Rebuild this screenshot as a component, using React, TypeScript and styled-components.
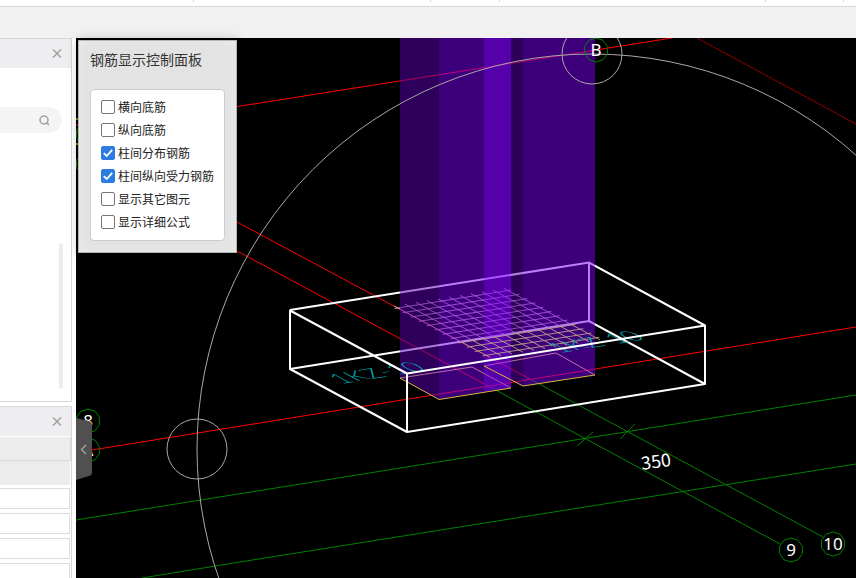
import React, { useState } from "react";
import styled, { createGlobalStyle } from "styled-components";

const GlobalStyle = createGlobalStyle`
  * { box-sizing: border-box; }
  html, body { margin: 0; height: 100%; overflow: hidden; }
  body { font-family: "Noto Sans CJK SC", sans-serif; font-size: 12px; color: #333; background: #fff; }
  button, input { font: inherit; margin: 0; }
`;

const Page = styled.div`
  display: flex;
  flex-direction: column;
  height: 100vh;
`;

const RibbonFooter = styled.div`
  display: grid;
  grid-template-columns: 194fr 237fr 69fr 266fr 78fr 12fr;
  height: 7px;
  flex: none;
  border-bottom: 1px solid #d8d8d8;
`;

const RibbonGroup = styled.div`
  height: 2px;
  border-right: 1px solid #d6d6d6;
  &:last-child { border-right: 0; }
`;

const Toolbar = styled.div`
  height: 31px;
  flex: none;
  background: #f1f1f1;
`;

const Workspace = styled.div`
  display: flex;
  flex: 1;
  min-height: 0;
`;

const Sidebar = styled.aside`
  display: flex;
  flex-direction: column;
  gap: 4px;
  width: 72px;
  margin-right: 4px;
  flex: none;
`;

const Dock = styled.section<{ $grow?: boolean }>`
  display: flex;
  flex-direction: column;
  flex: ${(p) => (p.$grow ? "1 1 0" : "0 0 364px")};
  min-height: 0;
  overflow: hidden;
  border: solid #d6d6d8;
  border-width: ${(p) => (p.$grow ? "1px 1px 0 0" : "1px 1px 1px 0")};
`;

const DockHeader = styled.header`
  display: flex;
  justify-content: flex-end;
  align-items: center;
  height: 29px;
  flex: none;
  padding-right: 8px;
  background: #eeeef0;
`;

const IconButton = styled.button`
  display: flex;
  align-items: center;
  justify-content: center;
  width: 12px;
  height: 12px;
  padding: 0;
  border: 0;
  background: none;
  color: #9c9c9e;
`;

const DockBody = styled.div`
  display: flex;
  flex-direction: column;
  flex: 1;
  padding: 39px 8px 12px 0;
`;

const SearchBox = styled.label`
  display: flex;
  align-items: center;
  height: 26px;
  margin-right: 1px;
  padding-right: 12px;
  border-radius: 0 13px 13px 0;
  background: #f4f4f4;
  color: #a0a0a0;
`;

const SearchInput = styled.input`
  flex: 1;
  min-width: 0;
  border: 0;
  outline: 0;
  background: none;
`;

const ScrollThumb = styled.div`
  align-self: flex-end;
  width: 4px;
  height: 146px;
  margin-top: auto;
  border-radius: 2px;
  background: #ececec;
`;

const PropertyHead = styled.div`
  height: 25px;
  flex: none;
  border: solid #d6d6d6;
  border-width: 1px 1px 1px 0;
  border-top-color: #fff;
  background: #ececec;
`;

const PropertyGroup = styled.div`
  height: 24px;
  flex: none;
  margin-right: 1px;
  background: #ececec;
`;

const PropertyList = styled.div`
  display: flex;
  flex-direction: column;
  gap: 4px;
  padding: 3px 1px 0 0;
`;

const PropertyInput = styled.input`
  width: 100%;
  height: 21px;
  flex: none;
  border: 1px solid #dcdcdc;
  border-left: 0;
  background: #fff;
`;

const Viewport = styled.main`
  position: relative;
  flex: 1;
  min-width: 0;
  background: #000;
`;

const Scene = styled.svg`
  display: block;
  width: 100%;
  height: 100%;
`;

const CollapseHandle = styled.button`
  position: absolute;
  left: 0;
  top: 380px;
  width: 16px;
  height: 62px;
  padding: 0;
  border: 0;
  background: none;
`;

const ControlPanel = styled.form`
  position: absolute;
  left: 2px;
  top: 2px;
  width: 159px;
  padding: 8px 11px 11px;
  border: 1px solid #b4b4b4;
  background: #e3e3e3;
  box-shadow: inset 0 0 10px #ececec, 0 0 10px rgba(0, 0, 0, 0.25);
`;

const PanelTitle = styled.h1`
  margin: 0 0 20px;
  font-size: 14px;
  line-height: 20px;
  font-weight: 400;
  color: #333;
`;

const OptionList = styled.div`
  padding: 5px 10px 7px;
  border: 1px solid #ccc;
  border-radius: 4px;
  background: #fff;
`;

const Option = styled.label`
  display: flex;
  align-items: center;
  gap: 3px;
  height: 23px;
  white-space: nowrap;
  color: #222;
`;

const CheckMark = styled.span`
  display: grid;
  flex: none;
  width: 14px;
  height: 14px;
`;

const Check = styled.input`
  grid-area: 1 / 1;
  appearance: none;
  width: 14px;
  height: 14px;
  border: 1px solid #767676;
  border-radius: 2px;
  background: #fff;
  &:checked { border-color: #2b7de1; background: #2b7de1; }
`;

const Tick = styled.svg`
  grid-area: 1 / 1;
  pointer-events: none;
`;

const OPTIONS = [
  { label: "横向底筋", on: false },
  { label: "纵向底筋", on: false },
  { label: "柱间分布钢筋", on: true },
  { label: "柱间纵向受力钢筋", on: true },
  { label: "显示其它图元", on: false },
  { label: "显示详细公式", on: false },
];

function CloseIcon() {
  return (
    <svg width="12" height="12" viewBox="0 0 12 12" fill="none" stroke="currentColor" strokeWidth="1.3">
      <path d="M2 1.500l8 8M10 1.500l-8 8" />
    </svg>
  );
}

function SearchIcon() {
  return (
    <svg width="12" height="12" viewBox="0 0 12 12" fill="none" stroke="currentColor" strokeWidth="1.5">
      <circle cx="6" cy="6" r="4" />
      <path d="M8.600 8.600l2.400 2.400" />
    </svg>
  );
}

/** Ten-sided bubble that carries the name of a grid axis. */
function AxisBubble({ x, y, label }: { x: number; y: number; label?: string }) {
  const points = Array.from({ length: 10 }, (_, i) => {
    const a = (i * Math.PI) / 5 - Math.PI / 2;
    return `${(x + 12 * Math.cos(a)).toFixed(1)},${(y + 12 * Math.sin(a)).toFixed(1)}`;
  }).join(" ");
  return (
    <g>
      <polygon points={points} fill="none" stroke="#008000" />
      {label && (
        <text x={x} y={y + 6} textAnchor="middle" fontSize="17" fill="#fff" fontFamily='"Noto Sans", sans-serif'>
          {label}
        </text>
      )}
    </g>
  );
}

/** Distribution bars, on the ground plane between the two columns. */
function rebarMesh() {
  const at = (u: number, v: number): string =>
    `${(398 + 11 * u + 8 * v).toFixed(1)} ${(308 - 1.75 * u + 4.3 * v).toFixed(1)}`;
  let d = "";
  for (let v = 0; v <= 11; v += 1) d += `M${at(-0.3, v)}L${at(10.3, v)}`;
  for (let u = 0; u <= 10; u += 1) d += `M${at(u, -0.5)}L${at(u, 11.5)}`;
  return d;
}

const MESH = rebarMesh();

function ModelScene() {
  return (
    <Scene viewBox="76 38 780 540" preserveAspectRatio="xMinYMin slice" fill="none" role="img" aria-label="三维模型">
      <defs>
        <clipPath id="meshBack">
          <path d="M380 280H640V313L290 369H380Z" />
        </clipPath>
        <clipPath id="meshFront">
          <path d="M290 369L640 313V380H290Z" />
        </clipPath>
      </defs>

      <g stroke="#008000">
        <path d="M76 520L856 395M142 578L240 562L560 511L856 464" />
        <path d="M490 387L780 544M530 379L823 537" />
        <path d="M577 446L593 432M620 439L635 424" />
      </g>
      <g stroke="#ff0000">
        <path d="M76 132L672 38M237 222L530 379M237 251L490 387M92 450L856 327" />
        <path d="M697 38L856 124" stroke="#900000" />
        <path d="M76 125h3M76 164h3" />
      </g>
      <path d="M76 119h3M76 144h3" stroke="#ffff00" />

      <g stroke="#fff" strokeWidth="2">
        <path d="M290 310L589 262.500L705 325.500M589 262.500V321M290 369L589 321L705 384" />
      </g>
      <path d={MESH} stroke="#e8b8d8" strokeOpacity="0.8" clipPath="url(#meshBack)" />
      <path d="M400 378L472 367L511 388M484 366L556 353L595 375" stroke="#ffe060" />

      <g fillOpacity="0.5">
        <path d="M400 38H439V399.500L400 378Z" fill="#5c00b8" />
        <path d="M439 38H484V392L439 399.500Z" fill="#7c00f4" />
        <path d="M484 38H511V388L484 392Z" fill="#8000ff" fillOpacity="0.667" />
        <path d="M511 38H523V386L511 380Z" fill="#5c00b8" />
        <path d="M523 38H595V375L523 386Z" fill="#7c00f4" />
      </g>

      <path d={MESH} stroke="#b8a090" strokeOpacity="0.9" clipPath="url(#meshFront)" />
      <g fill="#00a0a8" fontFamily="Lato, sans-serif" fontWeight="300" fontSize="26">
        <text transform="matrix(1 -0.16 0.86 0.47 341 384)">1KZ-10</text>
        <text transform="matrix(1 -0.16 0.86 0.47 560 353)">1KZ-10</text>
      </g>
      <path d="M400 378L439 399.500L511 388M484 366L523 386L595 375" stroke="#d8b838" />
      <g stroke="#fff" strokeWidth="2" strokeLinejoin="round">
        <path d="M290 310.500L407 373.500L705 325.500V384L407 432L290 369ZM407 373V432" />
      </g>

      <g stroke="#a8a8a8">
        <circle cx="592" cy="449" r="395" />
        <circle cx="592" cy="54" r="30" />
        <circle cx="197" cy="449" r="30" />
      </g>

      <AxisBubble x={596} y={50} label="B" />
      <AxisBubble x={791} y={550} label="9" />
      <AxisBubble x={833} y={544} label="10" />
      <AxisBubble x={88} y={421} label="8" />
      <AxisBubble x={88} y={450} label="A" />
      <AxisBubble x={88} y={134} />
      <AxisBubble x={88} y={164} />
      <text
        transform="translate(642 470) rotate(-8)"
        fontSize="18"
        fill="#fff"
        fontFamily='"Noto Sans CJK SC", sans-serif'
      >
        350
      </text>
    </Scene>
  );
}

function RebarPanel() {
  const [checked, setChecked] = useState(OPTIONS.map((o) => o.on));
  return (
    <ControlPanel>
      <PanelTitle>钢筋显示控制面板</PanelTitle>
      <OptionList>
        {OPTIONS.map((option, i) => (
          <Option key={option.label}>
            <CheckMark>
              <Check
                type="checkbox"
                checked={checked[i]}
                onChange={() => setChecked(checked.map((c, j) => (j === i ? !c : c)))}
              />
              {checked[i] && (
                <Tick width="14" height="14" viewBox="0 0 14 14" fill="none" stroke="#fff" strokeWidth="1.8">
                  <path d="M2.800 7.200L5.700 10L11.200 3.800" />
                </Tick>
              )}
            </CheckMark>
            {option.label}
          </Option>
        ))}
      </OptionList>
    </ControlPanel>
  );
}

export default function App() {
  return (
    <>
      <GlobalStyle />
      <Page>
        <RibbonFooter>
          {[0, 1, 2, 3, 4, 5].map((n) => (
            <RibbonGroup key={n} />
          ))}
        </RibbonFooter>
        <Toolbar />
        <Workspace>
          <Sidebar>
            <Dock>
              <DockHeader>
                <IconButton type="button" aria-label="关闭">
                  <CloseIcon />
                </IconButton>
              </DockHeader>
              <DockBody>
                <SearchBox>
                  <SearchInput type="text" aria-label="搜索" />
                  <SearchIcon />
                </SearchBox>
                <ScrollThumb />
              </DockBody>
            </Dock>
            <Dock $grow>
              <DockHeader>
                <IconButton type="button" aria-label="关闭">
                  <CloseIcon />
                </IconButton>
              </DockHeader>
              <PropertyHead />
              <PropertyGroup />
              <PropertyList>
                {[1, 2, 3, 4].map((n) => (
                  <PropertyInput key={n} type="text" aria-label={`属性 ${n}`} />
                ))}
              </PropertyList>
            </Dock>
          </Sidebar>
          <Viewport>
            <ModelScene />
            <CollapseHandle type="button" aria-label="收起">
              <svg width="16" height="62" viewBox="0 0 16 62" fill="none">
                <path d="M0 0L13 3Q16 4 16 7V54Q16 57 13 58L0 62Z" fill="#505050" />
                <path d="M10 27L5.500 31.500L10 36" stroke="#aaa" strokeWidth="1.2" />
              </svg>
            </CollapseHandle>
            <RebarPanel />
          </Viewport>
        </Workspace>
      </Page>
    </>
  );
}
